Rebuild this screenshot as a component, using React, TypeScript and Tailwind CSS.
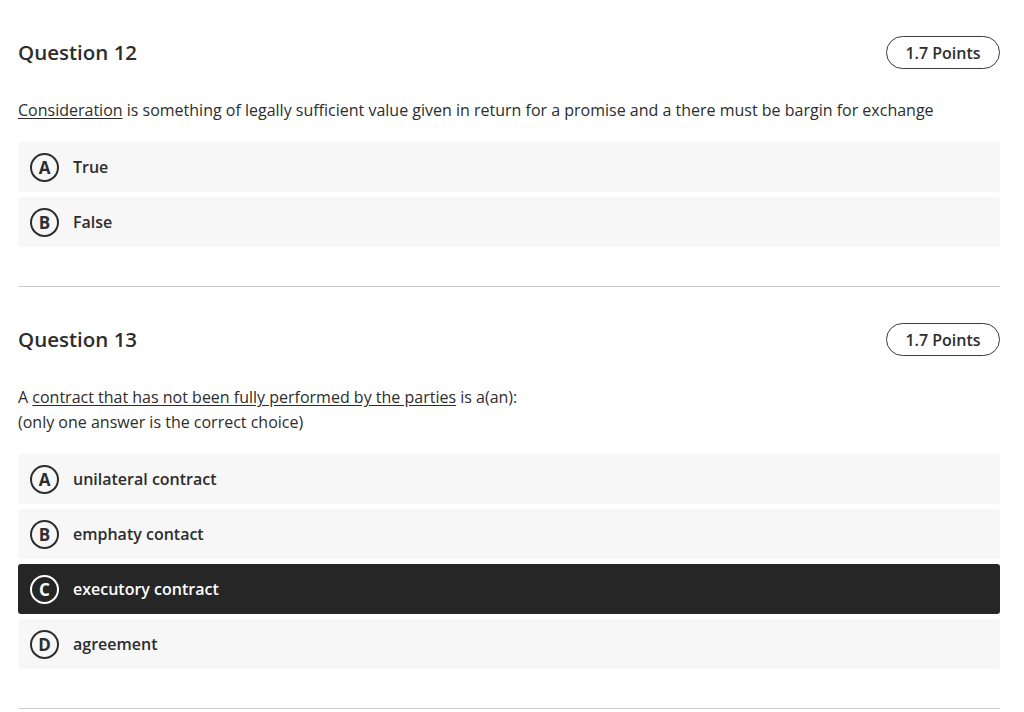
import React from 'react';

type Option = { letter: string; label: string; selected?: boolean };

const font = { fontFamily: '"Open Sans", "Noto Sans", sans-serif' };

const OptionRow: React.FC<Option> = ({ letter, label, selected }) => (
  <div
    className={`flex items-center h-[50px] pl-3 rounded-[3px] ${
      selected ? 'bg-[#262626] text-white' : 'bg-[#f7f7f7] text-[#2d2d2d]'
    }`}
  >
    <div
      className={`shrink-0 w-[29px] h-[29px] rounded-full border-2 flex items-center justify-center text-[17px] font-bold leading-none ${
        selected ? 'border-white' : 'border-[#2d2d2d]'
      }`}
    >
      {letter}
    </div>
    <span className="ml-[14px] text-[16px] font-semibold">{label}</span>
  </div>
);

const Question: React.FC<{ title: string; points: string; children: React.ReactNode; options: Option[] }> = ({
  title,
  points,
  children,
  options,
}) => (
  <section className="pt-9 pb-[39px] border-b border-[#cccccc]">
    {/* Header */}
    <div className="flex items-center justify-between h-[33px]">
      <h2 className="text-[20.5px] font-semibold text-[#2d2d2d]">{title}</h2>
      <span className="h-[33px] w-[114px] rounded-full border-[1.5px] border-[#3a3a3a] flex items-center justify-center text-[16px] font-semibold text-[#2d2d2d]">
        {points}
      </span>
    </div>

    {/* Prompt */}
    <div className="mt-[29px] text-[16px] leading-[25px] text-[#2d2d2d]">{children}</div>

    {/* Options */}
    <div className="mt-[19px] flex flex-col gap-[5px]">
      {options.map((o) => (
        <OptionRow key={o.letter} {...o} />
      ))}
    </div>
  </section>
);

export default function App() {
  return (
    <div className="min-h-screen bg-white pl-[18px] pr-6" style={font}>
      <Question
        title="Question 12"
        points="1.7 Points"
        options={[
          { letter: 'A', label: 'True' },
          { letter: 'B', label: 'False' },
        ]}
      >
        <p>
          <span className="underline underline-offset-2">Consideration</span> is something of legally sufficient value
          given in return for a promise and a there must be bargin for exchange
        </p>
      </Question>

      <Question
        title="Question 13"
        points="1.7 Points"
        options={[
          { letter: 'A', label: 'unilateral contract' },
          { letter: 'B', label: 'emphaty contact' },
          { letter: 'C', label: 'executory contract', selected: true },
          { letter: 'D', label: 'agreement' },
        ]}
      >
        <p>
          A <span className="underline underline-offset-2">contract that has not been fully performed by the parties</span>{' '}
          is a(an):
        </p>
        <p>(only one answer is the correct choice)</p>
      </Question>
    </div>
  );
}
